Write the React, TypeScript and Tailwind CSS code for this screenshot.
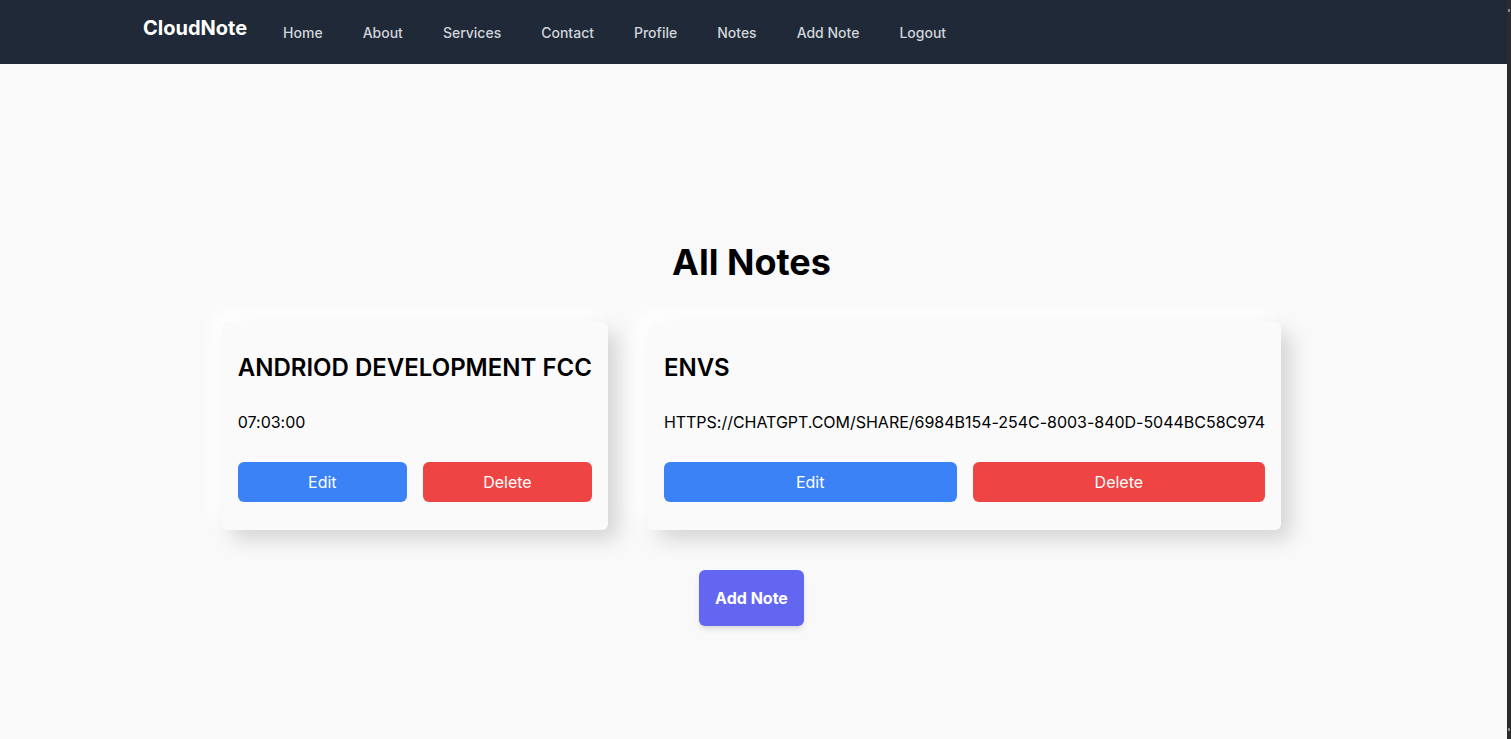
const links = ['Home', 'About', 'Services', 'Contact', 'Profile', 'Notes', 'Add Note', 'Logout'];

const notes = [
  { title: 'ANDRIOD DEVELOPMENT FCC', body: '07:03:00' },
  { title: 'ENVS', body: 'HTTPS://CHATGPT.COM/SHARE/6984B154-254C-8003-840D-5044BC58C974' },
];

function NoteCard({ title, body }: { title: string; body: string }) {
  return (
    <div className="rounded-md bg-[#fafafa] p-4 shadow-[10px_10px_20px_rgba(0,0,0,0.14),-10px_-10px_20px_#ffffff]">
      <h2 className="mt-[14px] mb-[26px] h-8 text-2xl leading-8 font-semibold whitespace-nowrap text-black">{title}</h2>
      <p className="mb-7 h-6 text-base leading-6 tracking-[-0.02px] whitespace-nowrap text-black">{body}</p>
      <div className="mb-3 flex gap-4">
        <button className="h-10 flex-1 rounded-md bg-[#3b82f6] text-base text-white">Edit</button>
        <button className="h-10 flex-1 rounded-md bg-[#ef4444] text-base text-white">Delete</button>
      </div>
    </div>
  );
}

export default function App() {
  return (
    <div className="flex h-[739px] overflow-hidden bg-[#2b2b2b] font-['Inter',sans-serif]">
      <div className="flex w-[1507px] flex-col bg-[#f9f9f9]">
        <nav className="flex h-16 items-start bg-[#1f2937] pl-[143px]">
          <span className="mt-[14px] mr-9 text-xl leading-7 font-bold text-white">CloudNote</span>
          <ul className="mt-[21px] flex gap-10">
            {links.map((link) => (
              <li key={link} className="text-sm leading-6 font-medium text-[#d1d5db]">
                {link}
              </li>
            ))}
          </ul>
        </nav>
        <main className="flex flex-col items-center pt-[176px] pr-1">
          <h1 className="mb-[38px] text-4xl leading-11 font-bold text-black">All Notes</h1>
          <div className="flex gap-10">
            {notes.map((note) => (
              <NoteCard key={note.title} title={note.title} body={note.body} />
            ))}
          </div>
          <button className="mt-10 h-14 rounded-md bg-[#6366f1] px-4 text-base font-bold text-white shadow-md">
            Add Note
          </button>
        </main>
      </div>
      <div className="flex flex-1 flex-col items-center">
        <div className="mt-[9px] h-[3px] w-[2px] bg-[#8a8a8a]" />
        <div className="mt-auto mb-[8px] h-[3px] w-[2px] bg-[#8a8a8a]" />
      </div>
    </div>
  );
}
